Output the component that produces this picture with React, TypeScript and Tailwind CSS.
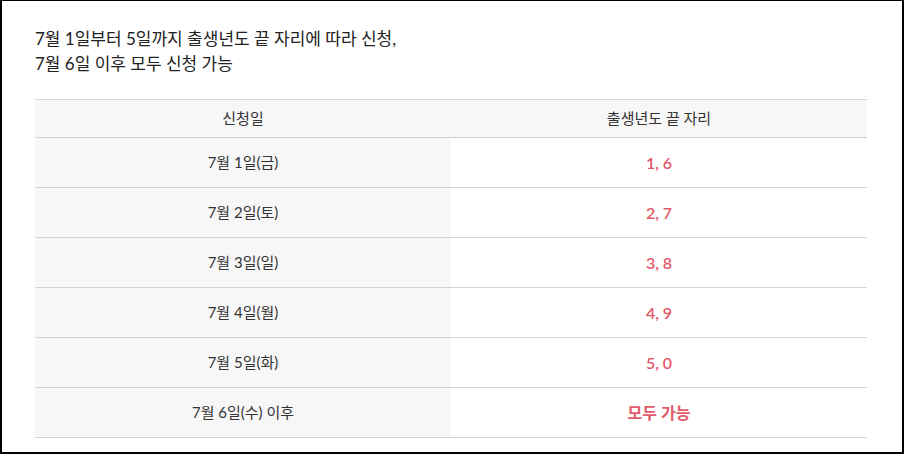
const rows = [
  { date: "7월 1일(금)", digits: "1, 6" },
  { date: "7월 2일(토)", digits: "2, 7" },
  { date: "7월 3일(일)", digits: "3, 8" },
  { date: "7월 4일(월)", digits: "4, 9" },
  { date: "7월 5일(화)", digits: "5, 0" },
  { date: "7월 6일(수) 이후", digits: "모두 가능" },
];

export default function App() {
  return (
    <div
      className="w-[904px] h-[454px] bg-white border-t border-x-2 border-b-2 border-black"
      style={{ fontFamily: 'Lato, "Noto Sans CJK KR", sans-serif' }}
    >
      {/* Notice */}
      <div className="pl-[33px] pr-[35px] pt-[25px]">
        <p className="text-[17px] leading-[25px] text-[#222]">
          7월 1일부터 5일까지 출생년도 끝 자리에 따라 신청,
          <br />
          7월 6일 이후 모두 신청 가능
        </p>

        {/* Schedule table */}
        <table className="mt-[23px] w-[832px] border-collapse text-[15px] text-[#333]">
          <thead>
            <tr className="bg-[#f7f7f7] border-t border-b border-[#d4d4d4]">
              <th className="w-[416px] h-[38px] font-normal text-center">신청일</th>
              <th className="h-[38px] font-normal text-center">출생년도 끝 자리</th>
            </tr>
          </thead>
          <tbody>
            {rows.map((row) => (
              <tr key={row.date} className="border-b border-[#d4d4d4]">
                <td className="h-[50px] bg-[#f7f7f7] text-center">{row.date}</td>
                <td className="h-[50px] bg-white text-center text-[16px] font-semibold text-[#e2596a]">
                  {row.digits}
                </td>
              </tr>
            ))}
          </tbody>
        </table>
      </div>
    </div>
  );
}
